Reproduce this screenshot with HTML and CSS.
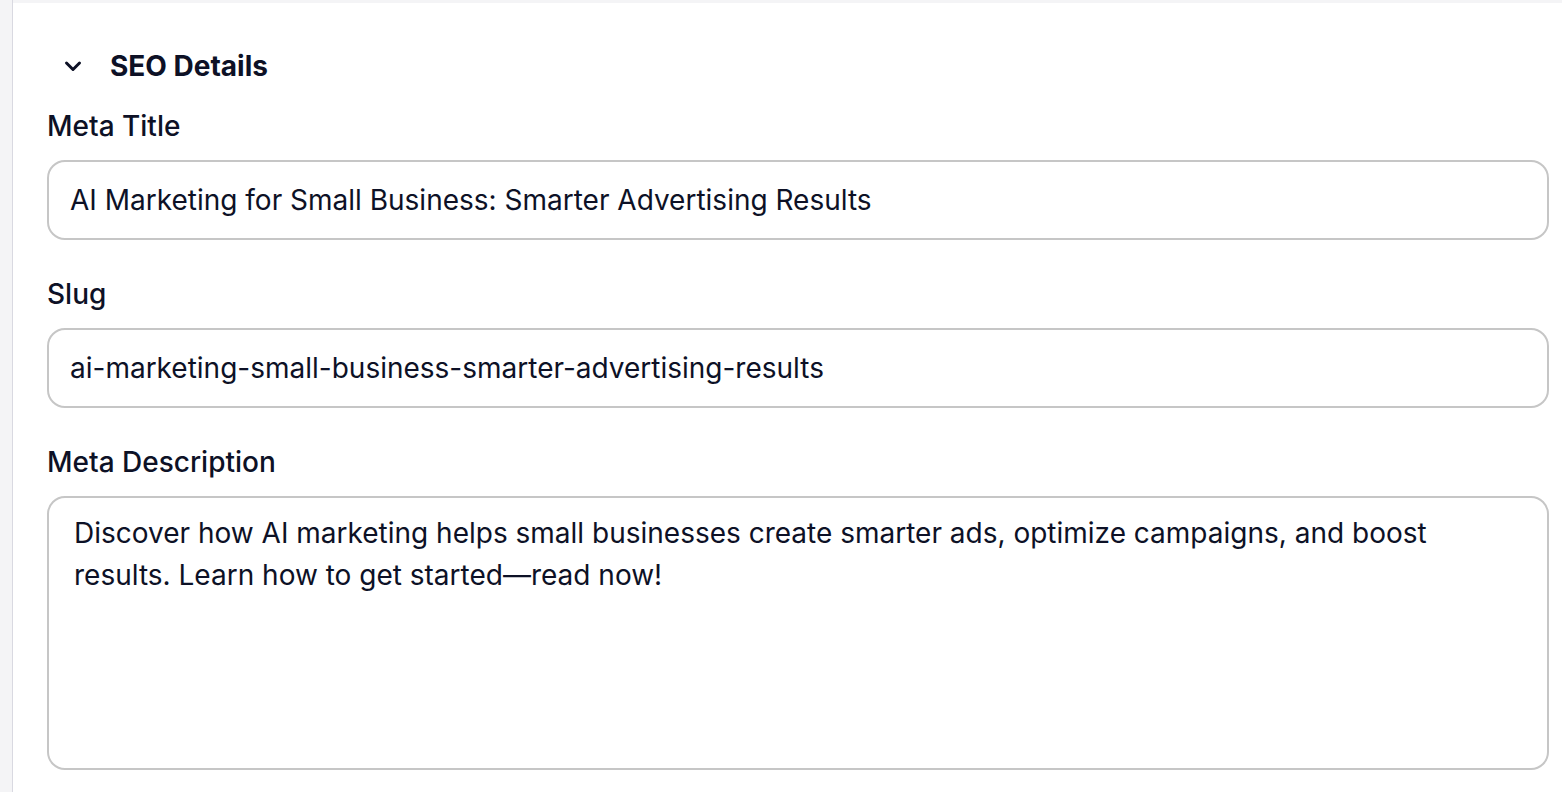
FILE: index.html
```html
<!DOCTYPE html>
<html lang="en">
<head>
<meta charset="utf-8">
<title>SEO Details</title>
<link rel="stylesheet" href="styles.css">
</head>
<body>
<div class="app">
  <div class="rail"></div>
  <main class="main">
    <section class="panel">
      <div class="section-head">
        <svg class="chev" width="18" height="12" viewBox="0 0 18 12" aria-hidden="true">
          <polyline points="2.5,3 9,9.5 15.5,3" fill="none" stroke="#0d1126" stroke-width="3" stroke-linecap="round" stroke-linejoin="round"/>
        </svg>
        <h2 class="section-title">SEO Details</h2>
      </div>
      <div class="fields">
        <div class="field">
          <label class="label" for="mt">Meta Title</label>
          <input class="input" id="mt" type="text" value="AI Marketing for Small Business: Smarter Advertising Results">
        </div>
        <div class="field">
          <label class="label" for="slug">Slug</label>
          <input class="input" id="slug" type="text" value="ai-marketing-small-business-smarter-advertising-results">
        </div>
        <div class="field">
          <label class="label" for="md">Meta Description</label>
          <textarea class="textarea" id="md">Discover how AI marketing helps small businesses create smarter ads, optimize campaigns, and boost results. Learn how to get started—read now!</textarea>
        </div>
      </div>
    </section>
  </main>
</div>
</body>
</html>
```
FILE: styles.css
```css
* { box-sizing: border-box; }
html, body { margin: 0; padding: 0; }
body {
  font-family: Inter, "Noto Sans", sans-serif;
  color: #0d1126;
  background: #f4f4f6;
  overflow: hidden;
}
.app {
  display: flex;
  height: 792px;
}
.rail {
  width: 12px;
  flex: none;
  background: #f4f4f6;
}
.main {
  flex: 1;
  border-left: 1px solid #d9d9e1;
  background: #f4f4f6;
  padding-top: 3px;
}
.panel {
  background: #ffffff;
  height: 100%;
  padding: 46px 13px 0 34px;
}
.section-head {
  display: flex;
  align-items: center;
  height: 40px;
  padding-left: 17px;
  margin-top: -3px;
}
.chev { display: block; flex: none; }
.section-title {
  margin: 0 0 0 28px;
  font-size: 28px;
  font-weight: 700;
  line-height: 40px;
}
.fields {
  display: flex;
  flex-direction: column;
  gap: 36px;
  margin-top: 22px;
}
.field {
  display: flex;
  flex-direction: column;
  gap: 16px;
}
.label {
  font-size: 28px;
  font-weight: 500;
  line-height: 36px;
}
.input, .textarea {
  display: block;
  width: 100%;
  font-family: inherit;
  font-size: 28px;
  color: #0d1126;
  background: #fff;
  border: 2px solid #c6c6c6;
  border-radius: 18px;
  outline: none;
  margin: 0;
}
.input {
  height: 80px;
  padding: 0 20px 0 21px;
  line-height: 36px;
}
.textarea {
  height: 274px;
  padding: 14px 20px 0 25px;
  line-height: 42px;
  resize: none;
  overflow: hidden;
}
```
